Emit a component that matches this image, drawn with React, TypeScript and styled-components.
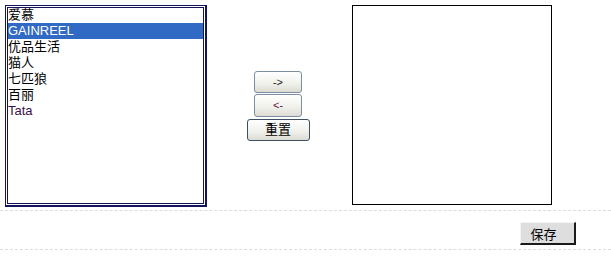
import React from "react";
import styled, { createGlobalStyle } from "styled-components";

const Global = createGlobalStyle`
  html, body { margin: 0; padding: 0; background: #fff; }
  body { font-family: "Liberation Sans", Arial, "Noto Sans CJK SC", sans-serif; width: 611px; height: 256px; overflow: hidden; }
`;

const Page = styled.div`
  display: flex;
  flex-direction: column;
  width: 611px;
`;

const Main = styled.div`
  display: flex;
  align-items: flex-start;
  padding: 5px 0 0 5px;
  height: 205px;
`;

const ListBox = styled.div`
  box-sizing: border-box;
  width: 202px;
  height: 202px;
  border-style: solid;
  border-color: #14145a;
  border-width: 1px 2px 2px 1px;
  padding: 1px;
`;

const ListInner = styled.div`
  box-sizing: border-box;
  height: 100%;
  border: 1px solid #14145a;
  overflow: hidden;
`;

const Items = styled.div`
  display: flex;
  flex-direction: column;
  margin-top: -1px;
`;

const Item = styled.div<{ $selected?: boolean; $color?: string }>`
  height: 16px;
  line-height: 16px;
  font-size: 13px;
  padding-left: 0;
  white-space: nowrap;
  font-family: "Liberation Sans", Arial, "Noto Sans CJK SC", sans-serif;
  color: ${(p) => (p.$selected ? "#fff" : p.$color || "#000")};
  background: ${(p) => (p.$selected ? "#316ac5" : "transparent")};
`;

const Center = styled.div`
  box-sizing: border-box;
  width: 145px;
  height: 202px;
  padding: 0 3px 1px 0;
  display: flex;
  flex-direction: column;
  align-items: center;
  justify-content: center;
`;

const MoveButton = styled.button<{ $wide?: boolean; $h?: number; $mt?: number }>`
  box-sizing: border-box;
  width: ${(p) => (p.$wide ? "63px" : "48px")};
  height: ${(p) => p.$h || 22}px;
  margin-top: ${(p) => p.$mt || 0}px;
  border: 1px solid ${(p) => (p.$wide ? "#3c5064" : "#7d8ea0")};
  border-radius: 3px;
  background: linear-gradient(#ffffff, #f0f0ea 60%, #dcdcd4);
  font-family: "Liberation Sans", Arial, "Noto Sans CJK SC", sans-serif;
  font-size: ${(p) => (p.$wide ? "13px" : "11px")};
  color: ${(p) => p.color || "#222"};
  padding: 0;
  line-height: 20px;
  cursor: pointer;
`;

const TargetBox = styled.div`
  box-sizing: border-box;
  width: 200px;
  height: 200px;
  border: 1px solid #000;
`;

const Dashed = styled.div`
  height: 0;
  border-top: 1px dashed #dcdcdc;
  width: 100%;
`;

const Footer = styled.div`
  display: flex;
  justify-content: flex-end;
  padding: 11px 35px 0 0;
  height: 27px;
`;

const SaveButton = styled.button`
  box-sizing: border-box;
  width: 56px;
  height: 23px;
  background: #dedede;
  border-style: solid;
  border-width: 1px 2px 2px 1px;
  border-color: #f4f4f4 #1a1a1a #1a1a1a #f4f4f4;
  font-family: "Noto Sans CJK SC", sans-serif;
  font-size: 13px;
  color: #000;
  padding: 0 8px 0 0;
  line-height: 19px;
`;

const items = [
  { label: "爱慕" },
  { label: "GAINREEL", selected: true },
  { label: "优品生活" },
  { label: "猫人" },
  { label: "七匹狼" },
  { label: "百丽" },
  { label: "Tata", color: "#3c0f46" },
];

export default function App() {
  return (
    <Page>
      <Global />
      <Main>
        <ListBox>
          <ListInner>
            <Items>
              {items.map((it) => (
                <Item key={it.label} $selected={it.selected} $color={it.color}>
                  {it.label}
                </Item>
              ))}
            </Items>
          </ListInner>
        </ListBox>
        <Center>
          <MoveButton>-&gt;</MoveButton>
          <MoveButton color="#6a1040" $h={23} $mt={1}>&lt;-</MoveButton>
          <MoveButton $wide color="#000" $mt={2}>重置</MoveButton>
        </Center>
        <TargetBox />
      </Main>
      <Dashed />
      <Footer>
        <SaveButton>保存</SaveButton>
      </Footer>
      <Dashed />
    </Page>
  );
}
